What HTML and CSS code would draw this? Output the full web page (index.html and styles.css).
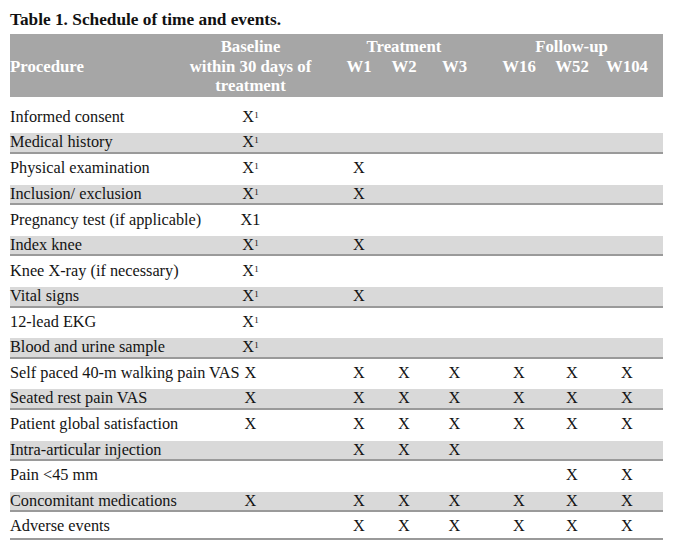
FILE: index.html
```html
<!DOCTYPE html>
<html lang="en">
<head>
<meta charset="utf-8">
<title>Table 1. Schedule of time and events.</title>
<link rel="stylesheet" href="styles.css">
</head>
<body>
<div class="page">
  <h1 class="title">Table 1. Schedule of time and events.</h1>
  <div class="table">
    <div class="head">
      <div class="h-proc">Procedure</div>
      <div class="h-base">Baseline<br>within 30 days of<br>treatment</div>
      <div class="h-treat">Treatment</div>
      <div class="h-follow">Follow-up</div>
      <div class="h-w w1">W1</div>
      <div class="h-w w2">W2</div>
      <div class="h-w w3">W3</div>
      <div class="h-w w16">W16</div>
      <div class="h-w w52">W52</div>
      <div class="h-w w104">W104</div>
    </div>

    <div class="row first"><div class="proc">Informed consent</div><div class="c">X<span class="sup">1</span></div><div class="c"></div><div class="c"></div><div class="c"></div><div class="c"></div><div class="c"></div><div class="c"></div></div>
    <div class="row alt"><div class="proc">Medical history</div><div class="c">X<span class="sup">1</span></div><div class="c"></div><div class="c"></div><div class="c"></div><div class="c"></div><div class="c"></div><div class="c"></div></div>
    <div class="row"><div class="proc">Physical examination</div><div class="c">X<span class="sup">1</span></div><div class="c">X</div><div class="c"></div><div class="c"></div><div class="c"></div><div class="c"></div><div class="c"></div></div>
    <div class="row alt"><div class="proc">Inclusion/ exclusion</div><div class="c">X<span class="sup">1</span></div><div class="c">X</div><div class="c"></div><div class="c"></div><div class="c"></div><div class="c"></div><div class="c"></div></div>
    <div class="row"><div class="proc">Pregnancy test (if applicable)</div><div class="c">X1</div><div class="c"></div><div class="c"></div><div class="c"></div><div class="c"></div><div class="c"></div><div class="c"></div></div>
    <div class="row alt"><div class="proc">Index knee</div><div class="c">X<span class="sup">1</span></div><div class="c">X</div><div class="c"></div><div class="c"></div><div class="c"></div><div class="c"></div><div class="c"></div></div>
    <div class="row"><div class="proc">Knee X-ray (if necessary)</div><div class="c">X<span class="sup">1</span></div><div class="c"></div><div class="c"></div><div class="c"></div><div class="c"></div><div class="c"></div><div class="c"></div></div>
    <div class="row alt"><div class="proc">Vital signs</div><div class="c">X<span class="sup">1</span></div><div class="c">X</div><div class="c"></div><div class="c"></div><div class="c"></div><div class="c"></div><div class="c"></div></div>
    <div class="row"><div class="proc">12-lead EKG</div><div class="c">X<span class="sup">1</span></div><div class="c"></div><div class="c"></div><div class="c"></div><div class="c"></div><div class="c"></div><div class="c"></div></div>
    <div class="row alt"><div class="proc">Blood and urine sample</div><div class="c">X<span class="sup">1</span></div><div class="c"></div><div class="c"></div><div class="c"></div><div class="c"></div><div class="c"></div><div class="c"></div></div>
    <div class="row"><div class="proc">Self paced 40-m walking pain VAS</div><div class="c">X</div><div class="c">X</div><div class="c">X</div><div class="c">X</div><div class="c">X</div><div class="c">X</div><div class="c">X</div></div>
    <div class="row alt"><div class="proc">Seated rest pain VAS</div><div class="c">X</div><div class="c">X</div><div class="c">X</div><div class="c">X</div><div class="c">X</div><div class="c">X</div><div class="c">X</div></div>
    <div class="row"><div class="proc">Patient global satisfaction</div><div class="c">X</div><div class="c">X</div><div class="c">X</div><div class="c">X</div><div class="c">X</div><div class="c">X</div><div class="c">X</div></div>
    <div class="row alt"><div class="proc">Intra-articular injection</div><div class="c"></div><div class="c">X</div><div class="c">X</div><div class="c">X</div><div class="c"></div><div class="c"></div><div class="c"></div></div>
    <div class="row"><div class="proc">Pain &lt;45 mm</div><div class="c"></div><div class="c"></div><div class="c"></div><div class="c"></div><div class="c"></div><div class="c">X</div><div class="c">X</div></div>
    <div class="row alt"><div class="proc">Concomitant medications</div><div class="c">X</div><div class="c">X</div><div class="c">X</div><div class="c">X</div><div class="c">X</div><div class="c">X</div><div class="c">X</div></div>
    <div class="row last"><div class="proc">Adverse events</div><div class="c"></div><div class="c">X</div><div class="c">X</div><div class="c">X</div><div class="c">X</div><div class="c">X</div><div class="c">X</div></div>
  </div>
</div>
</body>
</html>
```

FILE: styles.css
```css
html, body {
  margin: 0;
  padding: 0;
  background: #ffffff;
}

.page {
  padding-left: 10px;
  width: 653px;
  font-family: "Liberation Serif", "Times New Roman", serif;
  color: #141414;
}

.title {
  margin: 10px 0 4px 0;
  font-size: 17.3px;
  line-height: 20px;
  font-weight: bold;
  color: #111111;
}

.table {
  width: 653px;
}

.head {
  display: grid;
  grid-template-columns: 157px 167px 50px 40px 61px 68px 38px 72px;
  grid-template-rows: repeat(3, 19.5px);
  padding: 3px 0 1.1px 0;
  background: #a6a6a6;
  color: #ffffff;
  font-weight: bold;
  font-size: 16.8px;
  line-height: 19.5px;
}

.h-proc {
  grid-column: 1;
  grid-row: 1 / 4;
  align-self: center;
  white-space: nowrap;
}

.h-base {
  grid-column: 2;
  grid-row: 1 / 4;
  text-align: center;
  white-space: nowrap;
}

.h-treat {
  grid-column: 3 / 6;
  grid-row: 1;
  text-align: center;
  padding-right: 11px;
}

.h-follow {
  grid-column: 6 / 9;
  grid-row: 1;
  text-align: center;
  padding-right: 5px;
}

.h-w {
  grid-row: 2;
  text-align: center;
  white-space: nowrap;
}

.w1 { grid-column: 3; }
.w2 { grid-column: 4; }
.w3 { grid-column: 5; }
.w16 { grid-column: 6; }
.w52 { grid-column: 7; }
.w104 { grid-column: 8; }

.row {
  display: grid;
  grid-template-columns: 157px 167px 50px 40px 61px 68px 38px 72px;
  height: 25.6px;
  line-height: 25.6px;
  font-size: 16.3px;
}

.row.first {
  padding-top: 7.7px;
}

.row.alt {
  height: 18.6px;
  line-height: 18.6px;
  margin: 3.6px 0 1.4px 0;
  background: #d9d9d9;
  border-bottom: 2px solid #9a9a9a;
}

.row.last {
  height: 24.4px;
  line-height: 24.4px;
  border-bottom: 2px solid #9a9a9a;
}

.proc {
  white-space: nowrap;
}

.c {
  text-align: center;
  white-space: nowrap;
}

.sup {
  font-size: 9px;
  line-height: 0;
  vertical-align: 4.5px;
}
```
